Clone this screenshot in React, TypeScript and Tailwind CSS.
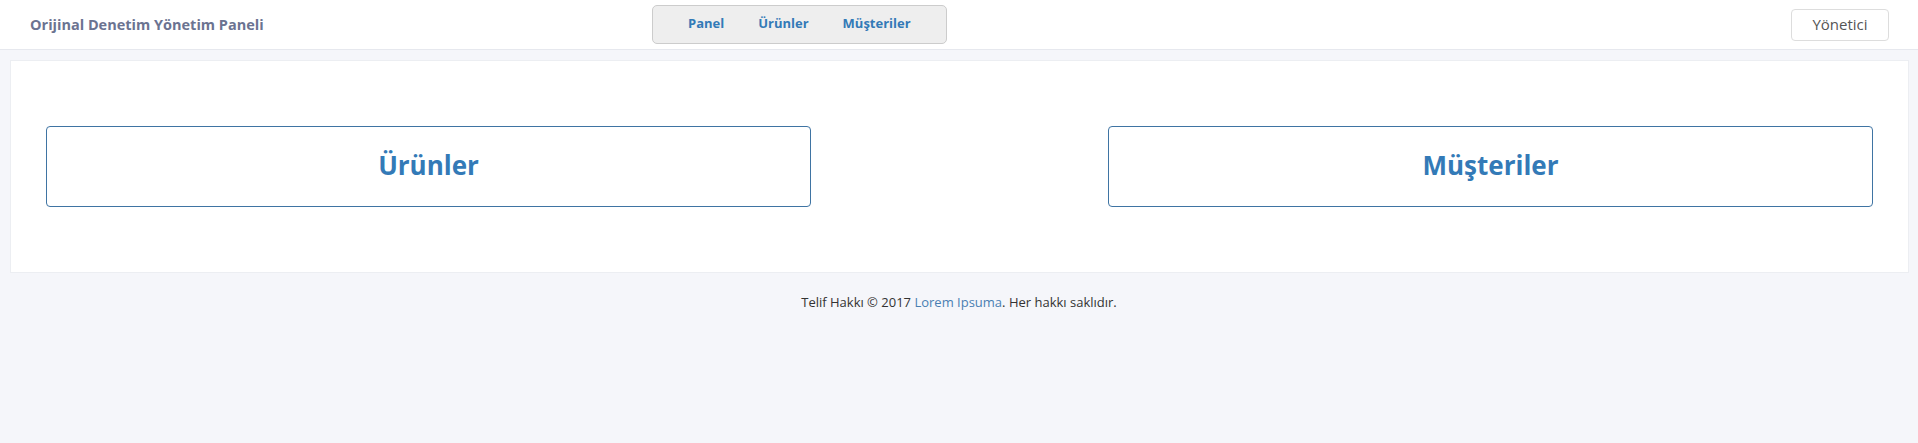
export default function App() {
  const font = { fontFamily: '"Open Sans", "Noto Sans", sans-serif' };

  return (
    <div className="min-h-screen bg-[#f5f6fa] text-[#333]" style={font}>
      <header className="h-[50px] bg-white border-b border-[#e6e8ee] flex items-center pl-[30px] pr-[29px]">
        <div className="w-[622px] text-[14.5px] font-bold text-[#6b7391]">Orijinal Denetim Yönetim Paneli</div>
        <nav className="flex items-center gap-[34px] h-[39px] px-[35px] mt-[-1px] bg-[#eeeeee] border border-[#cccccc] rounded-[5px] text-[13px] font-bold text-[#337ab7]">
          <a href="#">Panel</a>
          <a href="#">Ürünler</a>
          <a href="#">Müşteriler</a>
        </nav>
        <div className="flex-1 flex justify-end">
          <button className="h-[32px] w-[98px] bg-white border border-[#dddddd] rounded-[4px] text-[15px] text-[#555]">
            Yönetici
          </button>
        </div>
      </header>

      <main className="pl-[10px] pr-[9px] pt-[10px]">
        <div className="bg-white border border-[#eceef2] flex justify-between px-[35px] py-[65px]">
          <a href="#" className="w-[765px] h-[81px] flex items-center justify-center pb-[3px] border border-[#3f74a3] rounded-[4px] text-[26px] font-bold text-[#337ab7]">
            Ürünler
          </a>
          <a href="#" className="w-[765px] h-[81px] flex items-center justify-center pb-[3px] border border-[#3f74a3] rounded-[4px] text-[26px] font-bold text-[#337ab7]">
            Müşteriler
          </a>
        </div>
      </main>

      <footer className="text-center text-[13px] pt-[20px]">
        Telif Hakkı © 2017 <a href="#" className="text-[#4a7fb2]">Lorem Ipsuma</a>. Her hakkı saklıdır.
      </footer>
    </div>
  );
}
